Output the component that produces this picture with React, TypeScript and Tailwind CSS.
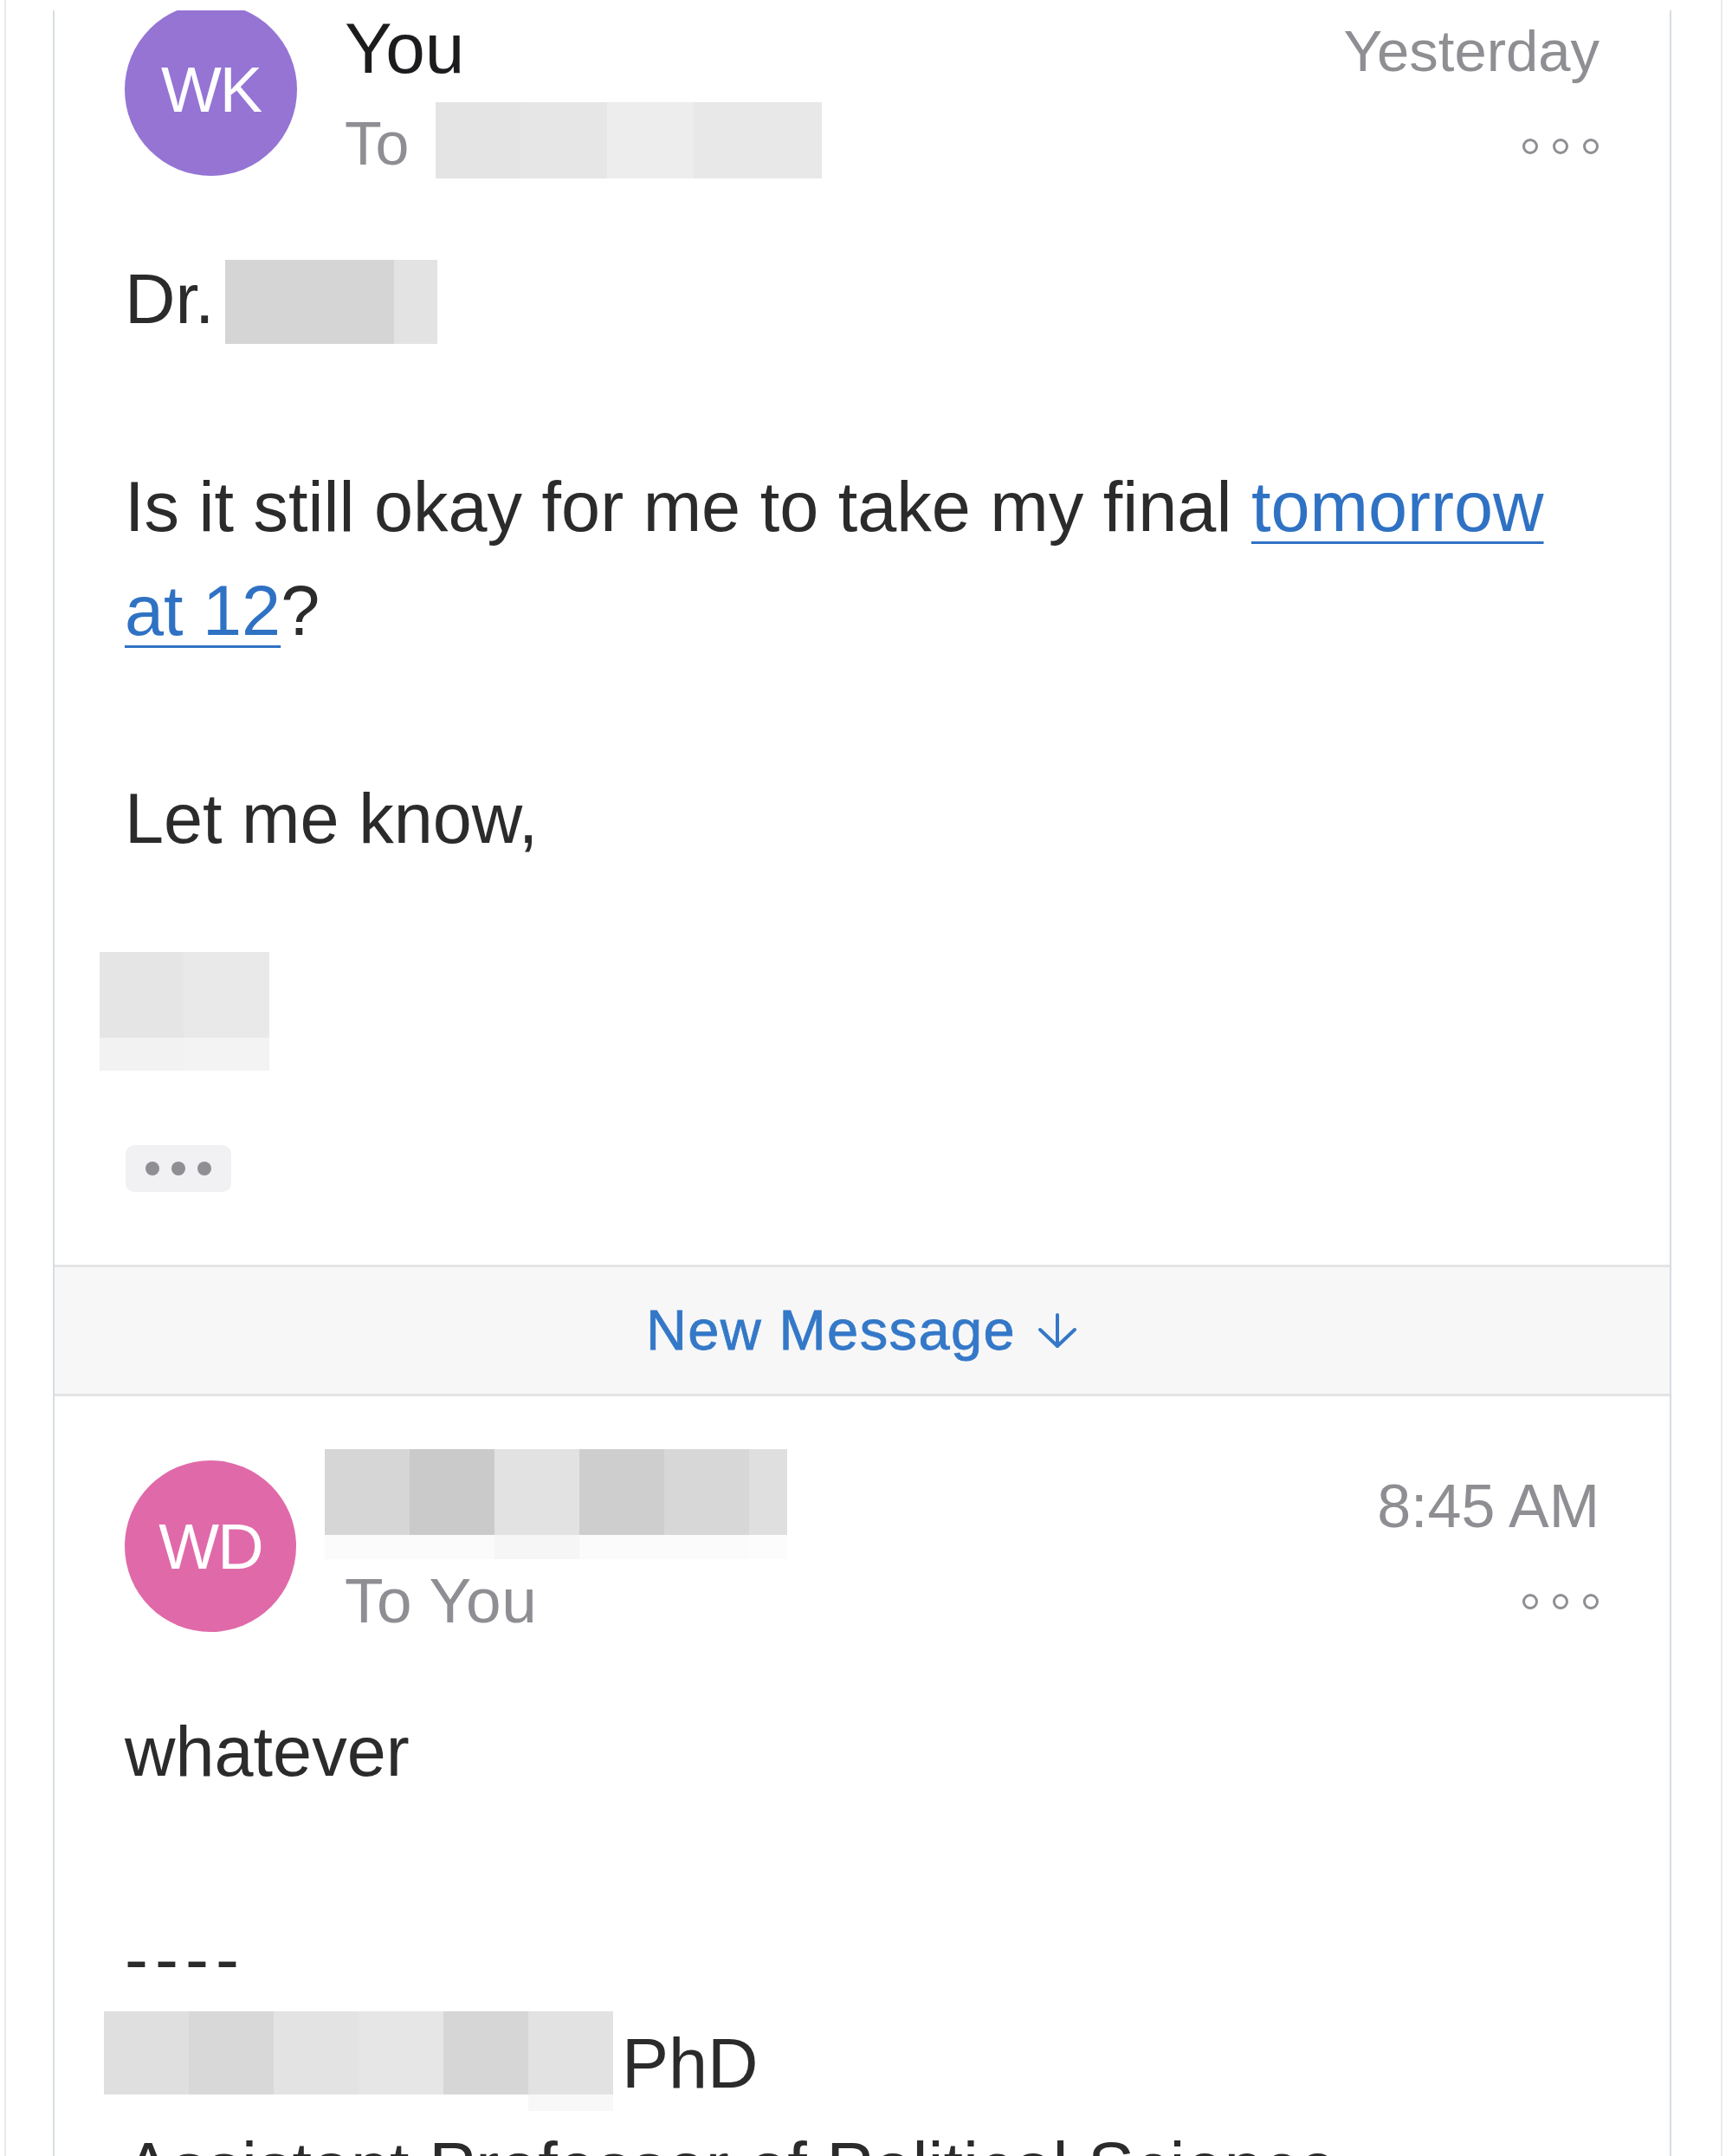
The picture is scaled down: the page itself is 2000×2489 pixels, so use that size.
const font = "font-['Liberation_Sans',Arial,sans-serif]";

type Seg = { w: number; c: string };

// pixelated redaction block, one or two rows of coloured cells
function Redact({ rows, className = "" }: { rows: { h: number; segs: Seg[] }[]; className?: string }) {
  return (
    <div className={`flex flex-col shrink-0 ${className}`}>
      {rows.map((r, i) => (
        <div key={i} className="flex" style={{ height: r.h }}>
          {r.segs.map((s, j) => (
            <div key={j} style={{ width: s.w, backgroundColor: s.c }} />
          ))}
        </div>
      ))}
    </div>
  );
}

function MoreDots() {
  return (
    <svg width="90" height="20" viewBox="0 0 90 20" fill="none" stroke="#8e8e93" strokeWidth="3">
      <circle cx="10" cy="10" r="7.5" />
      <circle cx="45" cy="10" r="7.5" />
      <circle cx="80" cy="10" r="7.5" />
    </svg>
  );
}

export default function App() {
  return (
    <div className={`w-[2000px] h-[2489px] overflow-hidden bg-white ${font}`}>
      <div className="ml-[5px] w-[1984px] h-full border-x-2 border-[#e6ebef] pt-[12px]">
        <div className="ml-[54px] w-[1869px] h-full border-x-2 border-[#d6dde3]">

          {/* first message */}
          <div className="px-[81px] pb-[84px]">
            <div className="flex items-start h-[194px]">
              {/* avatar is cropped at the top edge of the screenshot */}
              <div className="w-[199px] h-[191px] shrink-0 overflow-hidden">
                <div className="-mt-[8px] w-[199px] h-[199px] rounded-full bg-[#9574d4] flex items-center justify-center text-white text-[74px] tracking-[-2px]">
                  WK
                </div>
              </div>
              <div className="ml-[55px] flex-1">
                <div className="-mt-[2px] text-[82px] leading-[92px] text-[#1c1c1e]">You</div>
                <div className="mt-[24px] flex items-start h-[80px]">
                  <span className="text-[70px] leading-[80px] text-[#8e8e93] tracking-[0.5px]">To</span>
                  <Redact
                    className="ml-[30px] -mt-[8px]"
                    rows={[{ h: 88, segs: [{ w: 98, c: "#e4e4e4" }, { w: 100, c: "#e6e6e6" }, { w: 100, c: "#ededed" }, { w: 148, c: "#e8e8e8" }] }]}
                  />
                </div>
              </div>
              <div className="flex flex-col items-end">
                <div className="mt-[7px] text-[67px] leading-[80px] text-[#8e8e93]">Yesterday</div>
                <div className="mt-[60px]"><MoreDots /></div>
              </div>
            </div>

            <div className="mt-[79px] text-[81px] leading-[120px] text-[#2b2b2b]">
              <div className="flex items-center">
                <span>Dr.</span>
                <Redact
                  className="ml-[12px] mt-[7px]"
                  rows={[{ h: 97, segs: [{ w: 195, c: "#d5d5d5" }, { w: 50, c: "#e3e3e3" }] }]}
                />
              </div>
              <div className="h-[120px]" />
              <div>
                Is it still okay for me to take my final{" "}
                <span className="text-[#2f72c4] underline decoration-[3px] underline-offset-[12px]">tomorrow</span>
                <br />
                <span className="text-[#2f72c4] underline decoration-[3px] underline-offset-[12px]">at 12</span>?
              </div>
              <div className="h-[120px]" />
              <div>Let me know,</div>
            </div>

            <Redact
              className="mt-[94px] -ml-[29px]"
              rows={[
                { h: 99, segs: [{ w: 97, c: "#e5e5e5" }, { w: 99, c: "#e9e9e9" }] },
                { h: 38, segs: [{ w: 97, c: "#f2f2f2" }, { w: 99, c: "#f3f3f3" }] },
              ]}
            />

            <div className="mt-[86px] ml-[1px] w-[122px] h-[54px] rounded-[10px] bg-[#f1f1f3] flex items-center justify-center gap-[14px]">
              <span className="w-[16px] h-[16px] rounded-full bg-[#8e8e93]" />
              <span className="w-[16px] h-[16px] rounded-full bg-[#8e8e93]" />
              <span className="w-[16px] h-[16px] rounded-full bg-[#8e8e93]" />
            </div>
          </div>

          {/* new message divider */}
          <div className="h-[152px] border-y-[3px] border-[#e4e4e4] bg-[#f7f7f7] flex items-center justify-center gap-[24px]">
            <span className="text-[65px] leading-[64px] tracking-[1.4px] text-[#3478c8] [-webkit-text-stroke:0.8px_#3478c8]">New Message</span>
            <svg width="48" height="42" viewBox="0 0 48 42" fill="none" stroke="#3478c8" strokeWidth="4" strokeLinecap="round" strokeLinejoin="round">
              <path d="M24 3v36" />
              <path d="M4 20l20 19 20-19" />
            </svg>
          </div>

          {/* second message */}
          <div className="px-[81px]">
            <div className="flex items-start h-[276px]">
              <div className="mt-[74px] w-[198px] h-[198px] shrink-0 rounded-full bg-[#e06aa9] flex items-center justify-center text-white text-[74px] tracking-[-2px]">
                WD
              </div>
              <div className="ml-[56px] flex-1">
                <Redact
                  className="mt-[61px] -ml-[23px]"
                  rows={[
                    { h: 99, segs: [{ w: 98, c: "#d6d6d6" }, { w: 98, c: "#cacaca" }, { w: 98, c: "#e2e2e2" }, { w: 98, c: "#cecece" }, { w: 98, c: "#d7d7d7" }, { w: 44, c: "#dfdfdf" }] },
                    { h: 28, segs: [{ w: 98, c: "#fbfbfb" }, { w: 98, c: "#fbfbfb" }, { w: 98, c: "#f6f6f6" }, { w: 98, c: "#fbfbfb" }, { w: 98, c: "#fbfbfb" }, { w: 44, c: "#fcfcfc" }] },
                  ]}
                />
                <div className="mt-[8px] text-[73px] leading-[80px] text-[#8e8e93] tracking-[0.5px]">To You</div>
              </div>
              <div className="flex flex-col items-end">
                <div className="mt-[87px] text-[70px] leading-[80px] text-[#8e8e93]">8:45 AM</div>
                <div className="mt-[60px]"><MoreDots /></div>
              </div>
            </div>

            <div className="mt-[74px] text-[81px] leading-[120px] text-[#2b2b2b]">
              <div>whatever</div>
              <div className="h-[120px]" />
              <div className="tracking-[8px]">----</div>
              <div className="flex items-start">
                <Redact
                  className="-ml-[24px]"
                  rows={[
                    { h: 96, segs: [{ w: 98, c: "#dfdfdf" }, { w: 98, c: "#d8d8d8" }, { w: 98, c: "#e3e3e3" }, { w: 98, c: "#e6e6e6" }, { w: 98, c: "#d6d6d6" }, { w: 98, c: "#e2e2e2" }] },
                    { h: 19, segs: [{ w: 490, c: "#ffffff" }, { w: 98, c: "#f8f8f8" }] },
                  ]}
                />
                <span className="ml-[10px]">PhD</span>
              </div>
              <div>Assistant Professor of Political Science</div>
            </div>
          </div>

        </div>
      </div>
    </div>
  );
}
